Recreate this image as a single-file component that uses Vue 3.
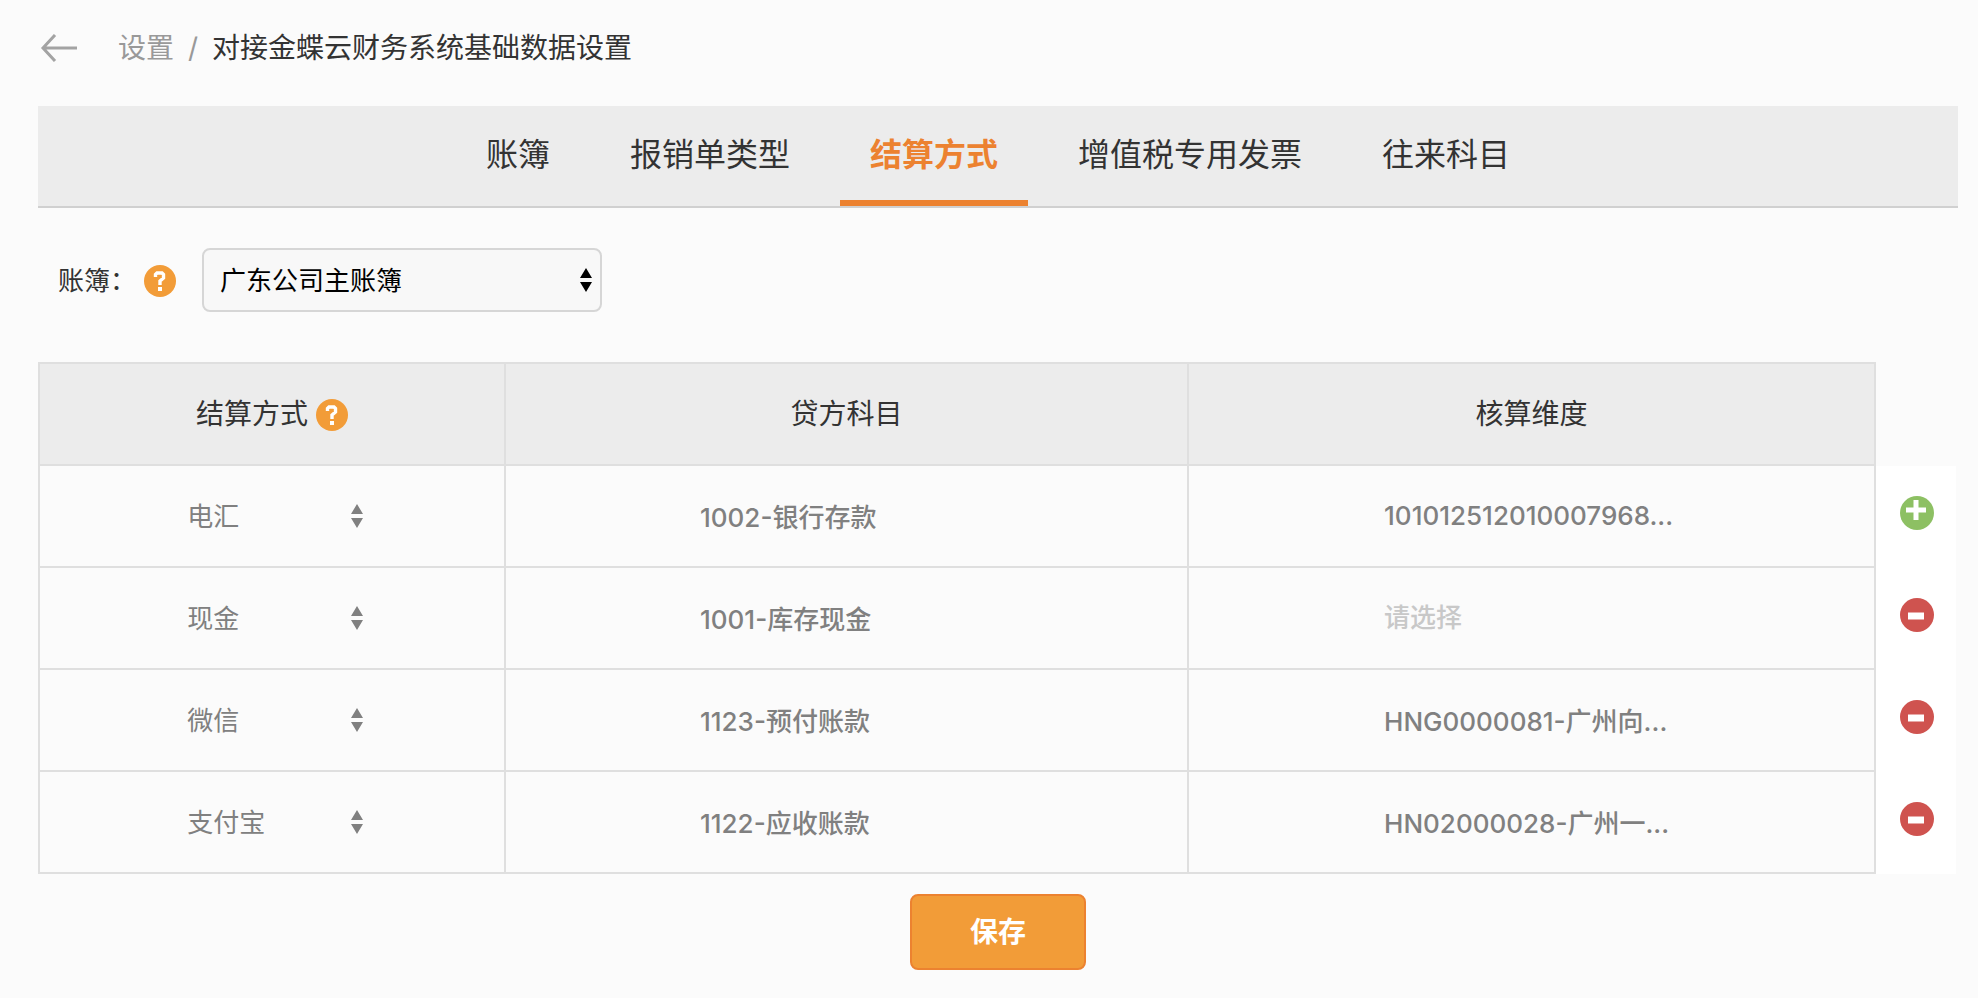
<template>
  <div class="page">
    <header class="page-header">
      <a class="back" href="#" aria-label="返回">
        <svg width="38" height="28" viewBox="0 0 38 28" fill="none" stroke="#a3a3a3" stroke-width="3">
          <path d="M37 14H3M15 1L3 14L15 27" />
        </svg>
      </a>
      <nav class="crumbs" aria-label="面包屑">
        <a class="crumb-link" href="#">设置</a>
        <span class="crumb-sep">/</span>
        <span>对接金蝶云财务系统基础数据设置</span>
      </nav>
    </header>

    <nav class="tabs">
      <button
        v-for="tab in tabs"
        :key="tab"
        type="button"
        class="tab"
        :class="{ active: tab === activeTab }"
        @click="activeTab = tab"
      >{{ tab }}</button>
    </nav>

    <div class="filter">
      <label class="filter-label" for="book">账簿：</label>
      <button class="icon-btn help" type="button" aria-label="账簿说明">
        <svg width="32" height="32" viewBox="0 0 32 32">
          <circle cx="16" cy="16" r="16" fill="#f29c38" />
          <path d="M11.5 12V9.5L13 8H18L19.5 9.5V13L16 16V20" fill="none" stroke="#fff" stroke-width="3.4" />
          <path d="M14 22h4v4h-4z" fill="#fff" />
        </svg>
      </button>
      <div class="select-box">
        <select id="book" v-model="book">
          <option v-for="item in books" :key="item">{{ item }}</option>
        </select>
        <svg class="caret" width="12" height="24" viewBox="0 0 12 24">
          <path d="M6 0L12 10H0zM0 14H12L6 24z" fill="currentColor" />
        </svg>
      </div>
    </div>

    <table class="grid">
      <colgroup>
        <col class="col-method" />
        <col class="col-subject" />
        <col />
        <col class="col-action" />
      </colgroup>
      <thead>
        <tr>
          <th scope="col">
            <div class="th-inner">
              <span>结算方式</span>
              <button class="icon-btn help-inline" type="button" aria-label="结算方式说明">
                <svg width="32" height="32" viewBox="0 0 32 32">
                  <circle cx="16" cy="16" r="16" fill="#f29c38" />
                  <path d="M11.5 12V9.5L13 8H18L19.5 9.5V13L16 16V20" fill="none" stroke="#fff" stroke-width="3.4" />
                  <path d="M14 22h4v4h-4z" fill="#fff" />
                </svg>
              </button>
            </div>
          </th>
          <th scope="col">贷方科目</th>
          <th scope="col">核算维度</th>
          <td class="blank"></td>
        </tr>
      </thead>
      <tbody>
        <tr v-for="(row, i) in rows" :key="row.id">
          <td>
            <div class="select-box method">
              <select v-model="row.method" aria-label="结算方式">
                <option v-for="m in methods" :key="m">{{ m }}</option>
              </select>
              <svg class="caret" width="12" height="24" viewBox="0 0 12 24">
                <path d="M6 0L12 10H0zM0 14H12L6 24z" fill="currentColor" />
              </svg>
            </div>
          </td>
          <td><input v-model="row.subject" class="picker" type="text" readonly placeholder="请选择" aria-label="贷方科目" /></td>
          <td><input v-model="row.dimension" class="picker" type="text" readonly placeholder="请选择" aria-label="核算维度" /></td>
          <td class="action">
            <button v-if="i === 0" class="icon-btn" type="button" aria-label="添加" @click="addRow">
              <svg width="34" height="34" viewBox="0 0 34 34">
                <circle cx="17" cy="17" r="17" fill="#8dc063" />
                <path d="M16 4V24M6 14H26" stroke="#fff" stroke-width="5" />
              </svg>
            </button>
            <button v-else class="icon-btn" type="button" aria-label="删除" @click="rows.splice(i, 1)">
              <svg width="34" height="34" viewBox="0 0 34 34">
                <circle cx="17" cy="17" r="17" fill="#cf534f" />
                <path d="M8 18H24" stroke="#fff" stroke-width="7" />
              </svg>
            </button>
          </td>
        </tr>
      </tbody>
    </table>

    <footer class="footer">
      <button class="save" type="button">保存</button>
    </footer>
  </div>
</template>

<script setup>
import { ref } from 'vue'

const tabs = ['账簿', '报销单类型', '结算方式', '增值税专用发票', '往来科目']
const activeTab = ref('结算方式')

const books = ['广东公司主账簿']
const book = ref(books[0])

const methods = ['电汇', '现金', '微信', '支付宝']

const rows = ref([
  { id: 1, method: '电汇', subject: '1002-银行存款', dimension: '101012512010007968...' },
  { id: 2, method: '现金', subject: '1001-库存现金', dimension: '' },
  { id: 3, method: '微信', subject: '1123-预付账款', dimension: 'HNG0000081-广州向...' },
  { id: 4, method: '支付宝', subject: '1122-应收账款', dimension: 'HN02000028-广州一...' },
])

let nextId = 5

function addRow() {
  rows.value.push({ id: nextId++, method: '电汇', subject: '', dimension: '' })
}
</script>

<style>
body {
  background: #fbfbfb;
}
</style>

<style scoped>
.page {
  padding: 0 20px 28px 38px;
  color: #333;
  font-family: Inter, 'Noto Sans CJK SC', sans-serif;
  font-size: 28px;
  line-height: 40px;
}

button,
select,
input {
  box-sizing: border-box;
  margin: 0;
  font: inherit;
}

.page-header {
  height: 96px;
  margin-bottom: 10px;
  display: flex;
  align-items: center;
  gap: 40px;
}

.back {
  display: flex;
  padding-left: 2px;
}

.crumbs {
  display: flex;
  gap: 14px;
}

.crumb-link,
.crumb-sep {
  color: #999;
  text-decoration: none;
}

.tabs {
  display: flex;
  justify-content: center;
  gap: 20px;
  background: #ececec;
  border-bottom: 2px solid #d0d0d0;
}

.tab {
  height: 100px;
  padding: 4px 30px 0;
  border: 0;
  border-bottom: 6px solid transparent;
  background: none;
  color: #333;
  font-size: 32px;
  cursor: pointer;
}

.tab.active {
  border-bottom-color: #ec8230;
  color: #ec8230;
  font-weight: 700;
}

.filter {
  display: flex;
  align-items: center;
  padding: 40px 20px 50px;
  font-size: 26px;
}

.filter-label {
  padding-top: 2px;
}

.icon-btn {
  display: inline-flex;
  padding: 0;
  border: 0;
  background: none;
  cursor: pointer;
}

.help,
.help-inline {
  padding-top: 2px;
}

.help {
  margin: 0 26px 0 8px;
}

.select-box {
  position: relative;
  width: 400px;
}

.select-box select {
  width: 100%;
  height: 64px;
  padding: 2px 40px 0 16px;
  border: 2px solid #d6d6d6;
  border-radius: 8px;
  background: #f8f8f8;
  color: #000;
  appearance: none;
}

.caret {
  position: absolute;
  top: 50%;
  right: 10px;
  margin-top: -12px;
  color: #000;
  pointer-events: none;
}

.grid {
  width: calc(100% - 2px);
  table-layout: fixed;
  border-collapse: separate;
  border-spacing: 0;
}

.col-method {
  width: 24.4%;
}

.col-subject {
  width: 35.6%;
}

.col-action {
  width: 80px;
}

.grid th,
.grid td {
  height: 100px;
  padding: 0;
  border-right: 2px solid #dfdfdf;
  border-bottom: 2px solid #dfdfdf;
  text-align: center;
}

.grid th {
  border-top: 2px solid #dfdfdf;
  background: #ececec;
  font-weight: 400;
}

.grid th:first-child,
.grid td:first-child {
  border-left: 2px solid #dfdfdf;
}

.grid .blank {
  border: 0;
}

.grid .action {
  padding: 0 0 12px 2px;
  height: 90px;
  border: 0;
  background: #fff;
}

.action .icon-btn {
  vertical-align: middle;
}

.th-inner {
  display: flex;
  align-items: center;
  justify-content: center;
  gap: 8px;
}

.method {
  width: 40%;
  margin: 0 auto;
}

.select-box.method select {
  padding: 2px 20px 0 8px;
  border: 0;
  background: none;
  color: #808080;
  font-size: 26px;
}

.method .caret {
  right: 2px;
  color: #808080;
}

.picker {
  width: 43%;
  height: 64px;
  padding: 0 0 2px;
  border: 0;
  outline: 0;
  background: none;
  color: #808080;
  font-size: 26px;
  font-weight: 500;
  vertical-align: middle;
}

.picker::placeholder {
  color: #c8c8c8;
}

.footer {
  display: flex;
  justify-content: center;
  padding-top: 20px;
}

.save {
  width: 176px;
  height: 76px;
  border: 2px solid #ec8230;
  border-radius: 8px;
  background: #f29c38;
  color: #fff;
  font-weight: 700;
  cursor: pointer;
}
</style>
